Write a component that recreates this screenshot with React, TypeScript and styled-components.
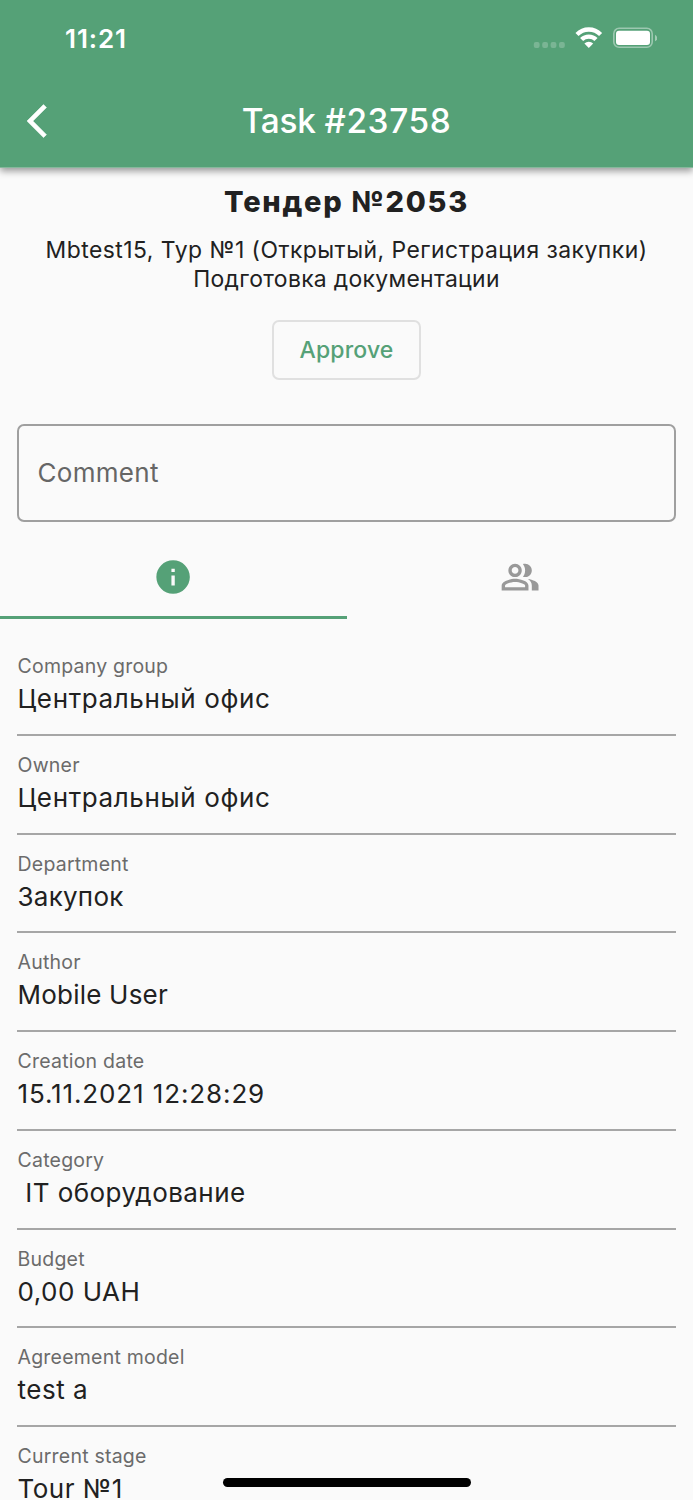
import React from 'react';
import styled, { createGlobalStyle } from 'styled-components';

const GREEN = '#55a177';

const GlobalStyle = createGlobalStyle`
  html, body {
    margin: 0;
    background: #fafafa;
  }
  *, *::before, *::after {
    box-sizing: border-box;
  }
`;

const Screen = styled.div`
  position: relative;
  width: 693px;
  height: 1500px;
  overflow: hidden;
  background: #fafafa;
  color: #212121;
  font-family: Inter, 'Liberation Sans', sans-serif;
`;

const Header = styled.header`
  height: 168px;
  background: ${GREEN};
  border-bottom: 1px solid #86b89c;
  color: #fff;
  box-shadow: 0 3px 7px rgba(0, 0, 0, 0.4);
`;

const StatusBar = styled.div`
  height: 74px;
  padding: 0 36px 0 65px;
  display: flex;
  justify-content: space-between;
  align-items: center;
`;

const Clock = styled.span`
  font-size: 26px;
  font-weight: 600;
  line-height: 30px;
  letter-spacing: 0.9px;
  padding-top: 3px;
`;

const StatusIcons = styled.svg`
  display: block;
  width: 124px;
  height: 24px;
  margin-top: 2px;
`;

const NavBar = styled.div`
  height: 93px;
  display: grid;
  grid-template-columns: 67px 1fr 67px;
  align-items: center;
`;

const BackButton = styled.button`
  border: 0;
  padding: 1px 0 0 27px;
  background: none;
  color: #fff;
  display: flex;
`;

const NavTitle = styled.h1`
  margin: 0;
  text-align: center;
  font-size: 33.4px;
  font-weight: 500;
  line-height: 40px;
  letter-spacing: -0.2px;
`;

const TaskNumber = styled.span`
  letter-spacing: 0.6px;
`;

const Glyph = styled.svg`
  display: block;
  width: 40.2px;
  height: 40.2px;
  fill: currentColor;
`;

const BackGlyph = styled(Glyph)`
  stroke: currentColor;
  stroke-width: 0.35;
`;

const Summary = styled.section`
  display: flex;
  flex-direction: column;
  align-items: center;
  text-align: center;
  padding-top: 16px;
`;

const TenderTitle = styled.h2`
  margin: 0;
  font-size: 29px;
  font-weight: 800;
  line-height: 36px;
  letter-spacing: 1.75px;
`;

const TenderInfo = styled.p`
  margin: 16px 0 0;
  font-size: 22.9px;
  line-height: 28.5px;
  white-space: nowrap;
`;

const InfoLine = styled.span<{ $tracking: number }>`
  display: block;
  letter-spacing: ${(p) => p.$tracking}px;
`;

const ApproveButton = styled.button`
  width: 149px;
  height: 60px;
  margin-top: 27px;
  padding: 0;
  border: 2px solid #e0e0e0;
  border-radius: 7px;
  background: none;
  color: ${GREEN};
  font: 500 23px/28px Inter, 'Liberation Sans', sans-serif;
  letter-spacing: 0.15px;
`;

const CommentField = styled.div`
  height: 98px;
  margin: 44px 17px 0;
  padding: 0 18.5px 1px;
  border: 2px solid #9f9f9f;
  border-radius: 7px;
  display: flex;
  align-items: center;
  color: #666;
  font-size: 26px;
  letter-spacing: 0.3px;
`;

const Tabs = styled.nav`
  display: grid;
  grid-template-columns: 1fr 1fr;
  height: 97px;
`;

const Tab = styled.div<{ $active?: boolean }>`
  display: flex;
  justify-content: center;
  padding-top: 35.4px;
  color: ${(p) => (p.$active ? GREEN : '#999')};
  border-bottom: 3px solid ${(p) => (p.$active ? GREEN : 'transparent')};
`;

const Details = styled.dl`
  margin: 18px 17px 0;
`;

const Field = styled.div`
  height: 98.75px;
  padding-top: 17px;
  border-bottom: 2px solid #a6a6a6;
`;

const Label = styled.dt`
  padding-left: 0.5px;
  font-size: 19.5px;
  line-height: 24px;
  letter-spacing: 0.22px;
  color: #6b6b6b;
`;

const Value = styled.dd<{ $tracking: number }>`
  margin: 5px 0 0;
  padding-left: 0.5px;
  font-size: 26px;
  line-height: 32px;
  letter-spacing: ${(p) => p.$tracking}px;
  white-space: pre;
`;

const HomeIndicator = styled.div`
  position: absolute;
  left: 222.5px;
  bottom: 13.5px;
  width: 248px;
  height: 8.5px;
  border-radius: 5px;
  background: #000;
`;

const fields: { label: string; value: string; tracking: number }[] = [
  { label: 'Company group', value: 'Центральный офис', tracking: 0.62 },
  { label: 'Owner', value: 'Центральный офис', tracking: 0.62 },
  { label: 'Department', value: 'Закупок', tracking: 0.25 },
  { label: 'Author', value: 'Mobile User', tracking: 0.22 },
  { label: 'Creation date', value: '15.11.2021 12:28:29', tracking: 0.88 },
  { label: 'Category', value: ' IT оборудование', tracking: 0.45 },
  { label: 'Budget', value: '0,00 UAH', tracking: 0.5 },
  { label: 'Agreement model', value: 'test a', tracking: 0.5 },
  { label: 'Current stage', value: 'Tour №1', tracking: 0.5 },
];

export default function App() {
  return (
    <Screen>
      <GlobalStyle />
      <Header>
        <StatusBar>
          <Clock>11:21</Clock>
          <StatusIcons viewBox="533 26 124 24">
            <g fill="#fff" fillOpacity="0.22">
              <rect x="533.8" y="42" width="5.8" height="6" rx="2" />
              <rect x="542.2" y="42" width="5.8" height="6" rx="2" />
              <rect x="550.6" y="42" width="5.8" height="6" rx="2" />
              <rect x="559" y="42" width="5.8" height="6" rx="2" />
            </g>
            <g fill="none" stroke="#fff" strokeWidth="4.3">
              <path d="M577 34.4A16.6 16.6 0 0 1 600.6 34.4" />
              <path d="M581.6 39.6A10 10 0 0 1 596 39.6" />
            </g>
            <path d="M588.8 48L584.4 43.6A6.2 6.2 0 0 1 593.2 43.6Z" fill="#fff" />
            <rect x="613.8" y="28.3" width="38.4" height="19" rx="5.4" fill="none" stroke="#fff" strokeOpacity="0.42" strokeWidth="1.6" />
            <rect x="616" y="30.7" width="34" height="14.3" rx="3" fill="#fff" />
            <path d="M655 34.8Q657.2 36 657.2 38T655 41.2Z" fill="#fff" fillOpacity="0.45" />
          </StatusIcons>
        </StatusBar>
        <NavBar>
          <BackButton aria-label="Back">
            <BackGlyph viewBox="0 0 24 24">
              <path d="M11.67 3.87L9.9 2.1 0 12l9.9 9.9 1.77-1.77L3.54 12z" />
            </BackGlyph>
          </BackButton>
          <NavTitle>
            Task <TaskNumber>#23758</TaskNumber>
          </NavTitle>
        </NavBar>
      </Header>
      <Summary>
        <TenderTitle>Тендер №2053</TenderTitle>
        <TenderInfo>
          <InfoLine $tracking={0.48}>Mbtest15, Тур №1 (Открытый, Регистрация закупки)</InfoLine>
          <InfoLine $tracking={0.32}>Подготовка документации</InfoLine>
        </TenderInfo>
        <ApproveButton>Approve</ApproveButton>
      </Summary>
      <CommentField>Comment</CommentField>
      <Tabs>
        <Tab $active>
          <Glyph viewBox="0 0 24 24">
            <path d="M12 2C6.48 2 2 6.48 2 12s4.48 10 10 10 10-4.48 10-10S17.52 2 12 2zm1 15h-2v-6h2v6zm0-8h-2V7h2v2z" />
          </Glyph>
        </Tab>
        <Tab>
          <Glyph viewBox="0 0 24 24">
            <path d="M16.67 13.13C18.04 14.06 19 15.32 19 17v3h4v-3c0-2.18-3.57-3.47-6.33-3.87zM15 12c2.21 0 4-1.79 4-4s-1.79-4-4-4c-.47 0-.91.1-1.33.24C14.5 5.27 15 6.58 15 8s-.5 2.73-1.33 3.76c.42.14.86.24 1.33.24zM9 12c2.21 0 4-1.79 4-4s-1.79-4-4-4-4 1.79-4 4 1.79 4 4 4zm0-6c1.1 0 2 .9 2 2s-.9 2-2 2-2-.9-2-2 .9-2 2-2zM9 13c-2.67 0-8 1.34-8 4v3h16v-3c0-2.66-5.33-4-8-4zm6 5H3v-.99C3.2 16.29 6.3 15 9 15s5.8 1.29 6 2v1z" />
          </Glyph>
        </Tab>
      </Tabs>
      <Details>
        {fields.map(({ label, value, tracking }) => (
          <Field key={label}>
            <Label>{label}</Label>
            <Value $tracking={tracking}>{value}</Value>
          </Field>
        ))}
      </Details>
      <HomeIndicator />
    </Screen>
  );
}
